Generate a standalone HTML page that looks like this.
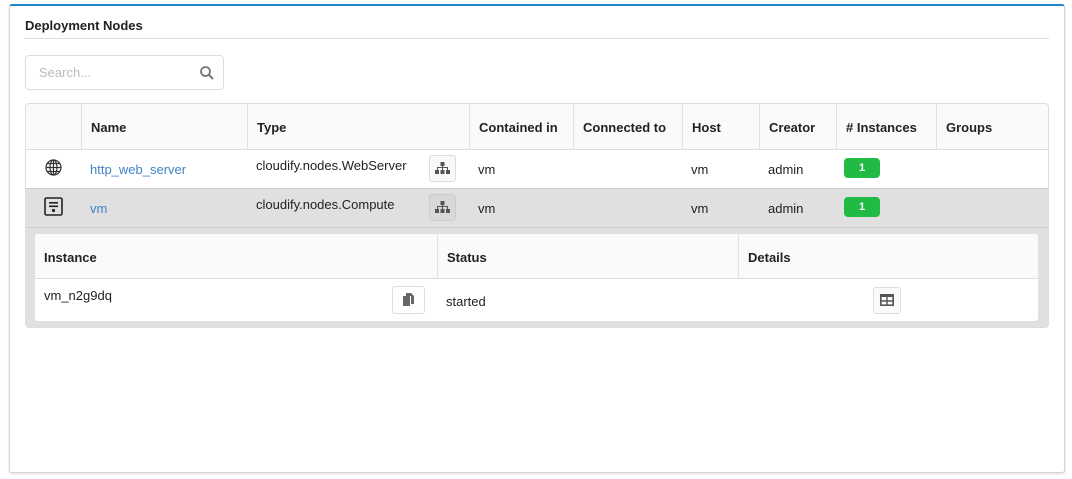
<!DOCTYPE html>
<html><head><style>
*{box-sizing:border-box;margin:0;padding:0}
body{width:1072px;height:479px;background:#fff;font-family:"Liberation Sans",sans-serif;font-size:13px;color:#222;position:relative;overflow:hidden}
.a{position:absolute}
.card{left:9px;top:4px;width:1056px;height:469px;border:1px solid #d4d4d5;border-top:2px solid #2185d0;border-radius:3px;box-shadow:0 1px 2px rgba(0,0,0,.15)}
.h{font-weight:bold;font-size:13px}
.t{font-size:13px}
.vl{width:1px;background:#e0e0e0}
.hl{height:1px;background:#ddd}
.lnk{color:#4183c4}
.btn{width:27px;height:27px;border:1px solid #ddd;border-radius:3px;background:#f8f8f8}
.badge{width:36px;height:20px;background:#21ba45;border-radius:4px;color:#fff;font-weight:bold;font-size:11px;text-align:center;line-height:20px}
</style></head><body>
<div class="a card"></div>
<div class="a h" style="left:25px;top:18px">Deployment Nodes</div>
<div class="a hl" style="left:24px;top:38px;width:1025px"></div>
<div class="a" style="left:25px;top:55px;width:199px;height:35px;border:1px solid #ddd;border-radius:4px"></div>
<div class="a" style="left:39px;top:65px;color:#bbb;font-size:13px">Search...</div>
<svg class="a" style="left:199px;top:65px" width="16" height="16" viewBox="0 0 16 16"><circle cx="6.5" cy="6.5" r="4.5" fill="none" stroke="#777" stroke-width="1.8"/><path d="M10 10l4 4" stroke="#777" stroke-width="2"/></svg>

<!-- table -->
<div class="a" style="left:25px;top:103px;width:1024px;height:225px;border:1px solid #ddd;border-radius:4px;background:#e0e0e0;overflow:hidden">
 <div class="a" style="left:0;top:0;width:1024px;height:46px;background:#f9fafb;border-bottom:1px solid #ddd"></div>
 <div class="a" style="left:0;top:46px;width:1024px;height:39px;background:#fff;border-bottom:1px solid #ccc"></div>
 <div class="a" style="left:0;top:85px;width:1024px;height:39px;background:#e0e0e0;border-bottom:1px solid #ccc"></div>
</div>
<div class="a vl" style="left:81px;top:104px;height:45px"></div>
<div class="a vl" style="left:247px;top:104px;height:45px"></div>
<div class="a vl" style="left:469px;top:104px;height:45px"></div>
<div class="a vl" style="left:573px;top:104px;height:45px"></div>
<div class="a vl" style="left:682px;top:104px;height:45px"></div>
<div class="a vl" style="left:759px;top:104px;height:45px"></div>
<div class="a vl" style="left:836px;top:104px;height:45px"></div>
<div class="a vl" style="left:936px;top:104px;height:45px"></div>
<div class="a h" style="left:91px;top:120px">Name</div>
<div class="a h" style="left:257px;top:120px">Type</div>
<div class="a h" style="left:479px;top:120px">Contained in</div>
<div class="a h" style="left:583px;top:120px">Connected to</div>
<div class="a h" style="left:692px;top:120px">Host</div>
<div class="a h" style="left:769px;top:120px">Creator</div>
<div class="a h" style="left:846px;top:120px"># Instances</div>
<div class="a h" style="left:946px;top:120px">Groups</div>

<svg class="a" style="left:45px;top:159px" width="17" height="17" viewBox="0 0 17 17" fill="none" stroke="#333" stroke-width="1.2"><circle cx="8.5" cy="8.5" r="7.5"/><ellipse cx="8.5" cy="8.5" rx="3.5" ry="7.5"/><path d="M1 8.5h15M2.5 4.5h12M2.5 12.5h12M8.5 1v15"/></svg>
<div class="a t lnk" style="left:90px;top:162px">http_web_server</div>
<div class="a t" style="left:256px;top:158px">cloudify.nodes.WebServer</div>
<div class="a btn" style="left:429px;top:155px"></div>
<svg class="a" style="left:435px;top:162px" width="15" height="13" viewBox="0 0 15 13" fill="#555"><rect x="5.5" y="0" width="4" height="4"/><rect x="7" y="4" width="1" height="2"/><rect x="2" y="5" width="11" height="1"/><rect x="2" y="5" width="1" height="3"/><rect x="12" y="5" width="1" height="3"/><rect x="7" y="5" width="1" height="3"/><rect x="0" y="8" width="4" height="4"/><rect x="5.5" y="8" width="4" height="4"/><rect x="11" y="8" width="4" height="4"/></svg>
<div class="a t" style="left:478px;top:162px">vm</div>
<div class="a t" style="left:691px;top:162px">vm</div>
<div class="a t" style="left:768px;top:162px">admin</div>
<div class="a badge" style="left:844px;top:158px">1</div>

<svg class="a" style="left:44px;top:197px" width="19" height="19" viewBox="0 0 19 19"><rect x="1" y="1" width="17" height="17" rx="1.5" fill="none" stroke="#222" stroke-width="1.6"/><rect x="5" y="5" width="9" height="1.6" fill="#222"/><rect x="5" y="8.5" width="9" height="1.6" fill="#222"/><circle cx="9.5" cy="13.5" r="1.6" fill="#222"/></svg>
<div class="a t lnk" style="left:90px;top:201px">vm</div>
<div class="a t" style="left:256px;top:197px">cloudify.nodes.Compute</div>
<div class="a btn" style="left:429px;top:194px;background:#d8d8d8;border-color:#ccc"></div>
<svg class="a" style="left:435px;top:201px" width="15" height="13" viewBox="0 0 15 13" fill="#555"><rect x="5.5" y="0" width="4" height="4"/><rect x="7" y="4" width="1" height="2"/><rect x="2" y="5" width="11" height="1"/><rect x="2" y="5" width="1" height="3"/><rect x="12" y="5" width="1" height="3"/><rect x="7" y="5" width="1" height="3"/><rect x="0" y="8" width="4" height="4"/><rect x="5.5" y="8" width="4" height="4"/><rect x="11" y="8" width="4" height="4"/></svg>
<div class="a t" style="left:478px;top:201px">vm</div>
<div class="a t" style="left:691px;top:201px">vm</div>
<div class="a t" style="left:768px;top:201px">admin</div>
<div class="a badge" style="left:844px;top:197px">1</div>

<!-- inner table -->
<div class="a" style="left:35px;top:234px;width:1003px;height:87px;background:#fff;border-radius:3px;overflow:hidden">
 <div class="a" style="left:0;top:0;width:1003px;height:45px;background:#f9fafb;border-bottom:1px solid #ddd"></div>
</div>
<div class="a vl" style="left:437px;top:234px;height:45px"></div>
<div class="a vl" style="left:738px;top:234px;height:45px"></div>
<div class="a h" style="left:44px;top:250px">Instance</div>
<div class="a h" style="left:447px;top:250px">Status</div>
<div class="a h" style="left:748px;top:250px">Details</div>
<div class="a t" style="left:44px;top:288px">vm_n2g9dq</div>
<div class="a btn" style="left:392px;top:286px;width:33px;height:28px;background:#fff"></div>
<svg class="a" style="left:403px;top:293px" width="11" height="13" viewBox="0 0 11 13" fill="#666"><rect x="0" y="3" width="7" height="10"/><path d="M3 0h5l3 3v8H8V3H3z"/></svg>
<div class="a t" style="left:446px;top:294px">started</div>
<div class="a btn" style="left:873px;top:287px;width:28px;height:27px;background:#fafafa"></div>
<svg class="a" style="left:880px;top:294px" width="14" height="12" viewBox="0 0 14 12"><rect x="0.8" y="0.8" width="12.4" height="10.4" fill="none" stroke="#555" stroke-width="1.6"/><rect x="0" y="0" width="14" height="3" fill="#555"/><path d="M7 3v8M1 7h12" stroke="#555" stroke-width="1.4"/></svg>
</body></html>
